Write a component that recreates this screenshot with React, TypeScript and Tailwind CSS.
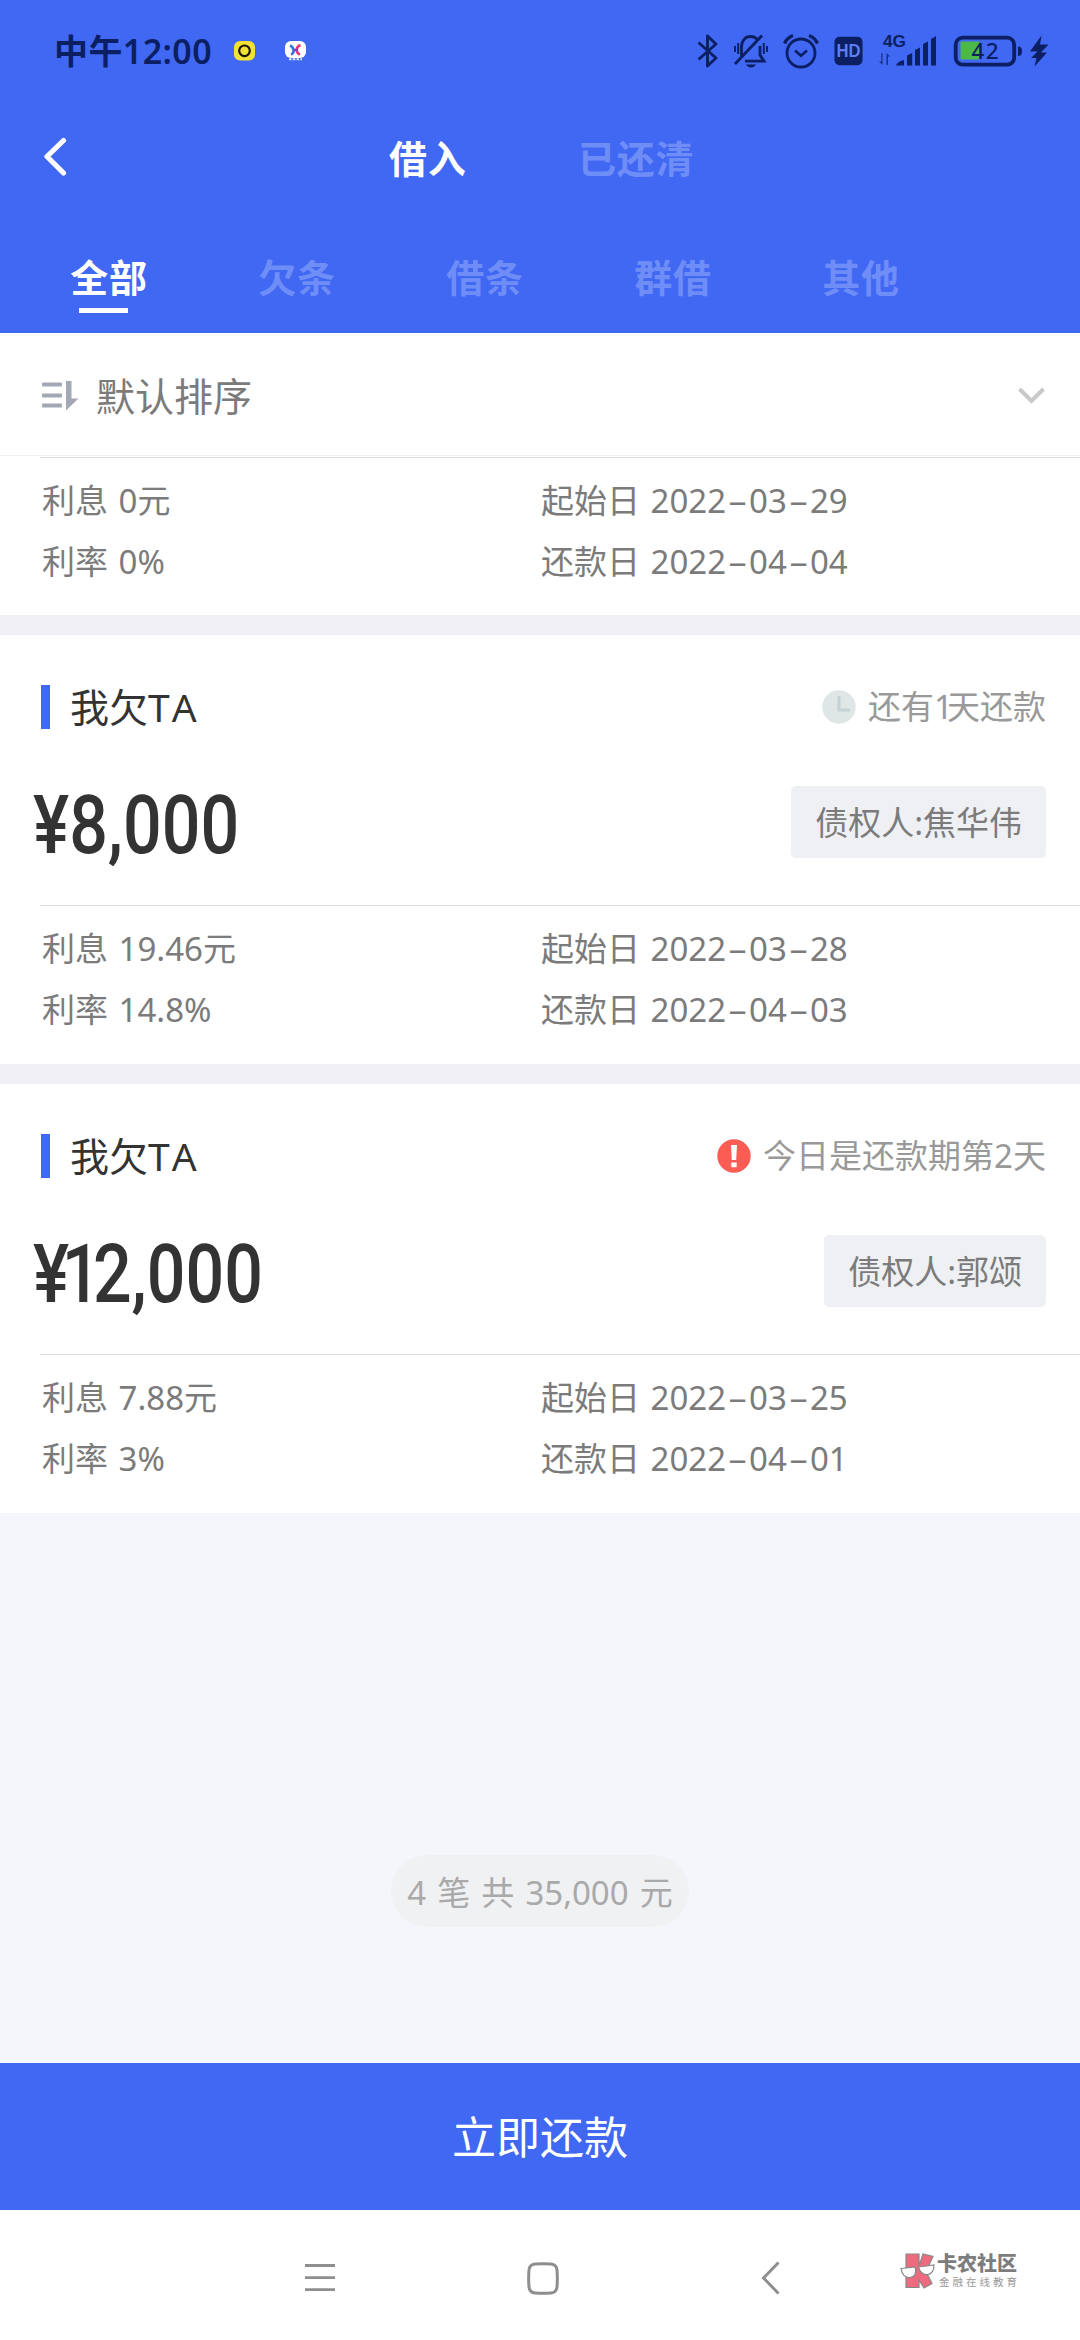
import { Fragment, useState } from "react";

type Loan = {
  id: number;
  amount?: string;
  creditor?: string;
  status?: "wait" | "alert";
  statusText?: string;
  interest: string;
  rate: string;
  start: string;
  due: string;
};

const tabs = ["全部", "欠条", "借条", "群借", "其他"];

const loans: Loan[] = [
  { id: 1, interest: "0元", rate: "0%", start: "2022-03-29", due: "2022-04-04" },
  {
    id: 2,
    amount: "¥8,000",
    creditor: "焦华伟",
    status: "wait",
    statusText: "还有1天还款",
    interest: "19.46元",
    rate: "14.8%",
    start: "2022-03-28",
    due: "2022-04-03",
  },
  {
    id: 3,
    amount: "¥12,000",
    creditor: "郭颂",
    status: "alert",
    statusText: "今日是还款期第2天",
    interest: "7.88元",
    rate: "3%",
    start: "2022-03-25",
    due: "2022-04-01",
  },
];

const StatusBar = () => (
  <div className="flex h-[102px] items-center pl-[54px] text-[#0b1f62]">
    <span className="w-[159px] whitespace-nowrap text-[34px] font-semibold leading-[40px] tracking-[0.4px]">
      中午12:00
    </span>
    <svg className="ml-[21px]" width="21" height="20" viewBox="0 0 21 20">
      <rect width="21" height="19.5" rx="6" fill="#f5e034" />
      <circle cx="10.5" cy="9.8" r="5.3" fill="none" stroke="#1a1500" strokeWidth="2.2" />
    </svg>
    <svg className="ml-[30px]" width="21" height="20" viewBox="0 0 21 20">
      <rect width="21" height="17" rx="6" fill="#fff" />
      <path d="M5 4.500c4 1.500 5 7.500 1 9" fill="none" stroke="#2d7be0" strokeWidth="2.600" />
      <path d="M15.500 4c-5 2-5 7.500-.5 9.500" fill="none" stroke="#e83a7c" strokeWidth="2.600" />
      <path d="M8 9h5" stroke="#8a3fc0" strokeWidth="2.500" />
      <path d="M4 18.300h13" stroke="#dfe6ff" strokeWidth="2" strokeDasharray="2.500 1.300" />
    </svg>

    <svg className="ml-[391px]" width="22" height="36" viewBox="0 0 22 36" fill="none" stroke="currentColor" strokeWidth="2.900">
      <path d="M1.500 9.500 L19 25 L10.500 33 V3 L19 11 L1.500 26.500" strokeLinejoin="round" />
    </svg>
    <svg className="ml-[14px]" width="36" height="36" viewBox="0 0 36 36" fill="none" stroke="currentColor" strokeWidth="2.800">
      <path d="M8.500 24V14c0-6.500 4-10.500 9-10.500 3 0 5.500 1.300 7 3.500" />
      <path d="M27 13v9l4 6.200H12" />
      <path d="M2 31 29 2.500" />
      <path d="M13 31.500h10c-1 2-3 3-5 3s-4-1-5-3z" fill="currentColor" stroke="none" />
      <path d="M2 13v6M5.200 10v11M34 13v6M30.800 10v11" strokeWidth="1.900" />
    </svg>
    <svg className="ml-[14px]" width="36" height="36" viewBox="0 0 36 36" fill="none" stroke="currentColor" strokeWidth="2.800">
      <circle cx="18" cy="20" r="14" />
      <path d="M12 17.500l6 5.200 6-5.200" />
      <path d="M1.500 10.500C3 7 6 4 10 2.500M34.500 10.500C33 7 30 4 26 2.500" strokeWidth="3.400" />
    </svg>
    <svg className="ml-[15px]" width="29" height="30" viewBox="0 0 29 30">
      <rect x="0.500" y="0.800" width="28" height="28.500" rx="5" fill="currentColor" />
      <text x="14.500" y="21" textAnchor="middle" fontSize="18" fontWeight="700" fontFamily="Liberation Sans" fill="#5f7df0" textLength="24" lengthAdjust="spacingAndGlyphs">
        HD
      </text>
    </svg>
    <svg className="ml-[15px] overflow-visible" width="60" height="36" viewBox="0 0 60 36" fill="currentColor">
      <text x="5" y="14" fontSize="16.500" fontWeight="700" fontFamily="Liberation Sans" textLength="23" lengthAdjust="spacingAndGlyphs">
        4G
      </text>
      <path d="M4.500 20v12l-3.500-3.500h2.300V20zM8.500 32V20l3.500 3.500h-2V32z" opacity=".75" />
      <path d="M18 32.500c1-3 4-4.500 8-5.500v5.500z" />
      <path d="M29 22.500l5.200-2.500v12.500H29zM37 17l5-2.500v18h-5zM45 11l5-2.500v24h-5zM53 6l5-3v29.500h-5z" />
    </svg>
    <svg className="ml-[14px]" width="100" height="36" viewBox="0 0 100 36">
      <rect x="3.700" y="4.700" width="58.500" height="27" rx="7" fill="none" stroke="currentColor" strokeWidth="3.800" />
      <path d="M10 8.500h17v18H10a1.500 1.500 0 0 1-1.500-1.500V10A1.500 1.500 0 0 1 10 8.500z" fill="#4bb848" />
      <path d="M66 13.500c3 0 4 1.500 4 4.700s-1 4.800-4 4.800z" fill="currentColor" />
      <text x="33" y="26" textAnchor="middle" fontSize="22.500" fontWeight="500" fontFamily="Noto Sans" fill="currentColor" textLength="27">
        42
      </text>
      <path d="M89.500 2.500 78 18.500h7.500L79 25h5.500l-2 8.500L95 19.500h-6l7.500-8h-8.500z" fill="currentColor" />
    </svg>
  </div>
);

const Header = () => {
  const [active, setActive] = useState(0);

  return (
    <header className="h-[333px] bg-[#4068f3] text-white">
      <StatusBar />
      <div className="flex h-[112px] items-center pl-10 text-[38px] font-bold tracking-[0.7px]">
        <svg width="30" height="42" viewBox="0 0 30 42" fill="none" stroke="currentColor" strokeWidth="5.200" strokeLinecap="round" strokeLinejoin="round">
          <path d="M23.500 3.500 7 19.500l16.500 16.500" />
        </svg>
        <span className="ml-[319px] w-[78px] whitespace-nowrap">借入</span>
        <span className="ml-[111px] whitespace-nowrap text-[#6f8df7]">已还清</span>
      </div>
      <nav className="flex pl-[15px] pt-[38px] text-[38px] font-bold tracking-[0.7px]">
        {tabs.map((tab, i) => (
          <button key={tab} onClick={() => setActive(i)} className="flex w-[188px] flex-col items-center">
            <span className={`leading-[50px] ${i === active ? "text-white" : "text-[#6f8df7]"}`}>{tab}</span>
            {i === active && <span className="mr-[11px] mt-[6px] h-[5px] w-[49px] bg-white" />}
          </button>
        ))}
      </nav>
    </header>
  );
};

const SortBar = () => (
  <div className="flex h-[123px] items-center border-b border-[#efefef] bg-white pl-[42px] pr-[35px] text-[#7b7b7b]">
    <svg className="mt-[4px]" width="37" height="30" viewBox="0 0 37 30" fill="#a3a8b4">
      <rect y="1.500" width="20" height="4" rx="1" />
      <rect y="12.500" width="20" height="4" rx="1" />
      <rect y="22.500" width="20" height="4" rx="1" />
      <path d="M24 0h5.500v17.500H36.500L24 29.500z" />
    </svg>
    <span className="ml-[17px] pt-[4px] text-[39px] leading-[50px]">默认排序</span>
    <svg className="ml-auto mt-[4px]" width="27" height="18" viewBox="0 0 27 18" fill="none" stroke="#c9c9c9" strokeWidth="4">
      <path d="M1.500 2 13.500 14 25.500 2" />
    </svg>
  </div>
);

const WaitIcon = () => (
  <svg width="34" height="34" viewBox="0 0 34 34">
    <circle cx="17" cy="17" r="16.700" fill="#dfe6e6" />
    <path d="M17 6v14h11" fill="none" stroke="#c5d1d2" strokeWidth="3" />
  </svg>
);

const AlertIcon = () => (
  <svg width="34" height="34" viewBox="0 0 34 34">
    <circle cx="17" cy="17" r="16.700" fill="#fb5c53" />
    <path d="M14 6h6l-.8 15h-4.400zM14.300 23.500h5.400v4.700h-5.400z" fill="#fff" />
  </svg>
);

const DateText = ({ value }: { value: string }) => (
  <>
    {value.split("-").map((part, i) => (
      <Fragment key={i}>
        {i > 0 && <span className="inline-block w-[23px] scale-x-[1.9] text-center">-</span>}
        {part}
      </Fragment>
    ))}
  </>
);

// The "1" is narrow, so it sits closer to its neighbours than the other digits
const Amount = ({ value }: { value: string }) => (
  <div className="origin-left scale-x-[0.83] whitespace-nowrap pt-[5px] font-[Roboto] text-[82px] font-medium leading-[72px] text-[#333]">
    {value.split("").map((ch, i) => (
      <span key={i} className={ch === "1" || value[i + 1] === "1" ? "tracking-[-9px]" : ""}>
        {ch}
      </span>
    ))}
  </div>
);

const StatusText = ({ value }: { value: string }) => (
  <span>
    {value.split("").map((ch, i) => (
      <span key={i} className={ch === "1" ? "tracking-[-6px]" : ""}>
        {ch}
      </span>
    ))}
  </span>
);

const LoanCard = ({ loan }: { loan: Loan }) => (
  <section className="bg-white">
    {loan.amount && (
      <>
        <div className="flex h-[94px] items-center pr-[34px] pt-[50px]">
          <span className="ml-[41px] h-11 w-[9px] bg-[#4068f3]" />
          <span className="ml-[20px] text-[39px] leading-[44px] text-[#333]">
            我欠<span className="tracking-[2px] [font-kerning:none]">TA</span>
          </span>
          <div className="ml-auto flex items-center gap-[12px] text-[33px] leading-[44px] text-[#999]">
            {loan.status === "wait" ? <WaitIcon /> : <AlertIcon />}
            <StatusText value={loan.statusText ?? ""} />
          </div>
        </div>
        <div className="mt-[57px] flex h-[72px] items-center justify-between pl-[33px] pr-[34px]">
          <Amount value={loan.amount} />
          <span className="h-[72px] rounded-[5px] bg-[#eff0f4] px-6 text-[33px] leading-[74px] text-[#7b7b7b]">
            债权人:{loan.creditor}
          </span>
        </div>
      </>
    )}
    <div className={`ml-10 border-t border-[#dcdcdc] ${loan.amount ? "mt-[47px]" : "mt-px"}`} />
    <div
      className={`grid grid-cols-2 pt-[12px] text-[33px] leading-[61px] text-[#7b7b7b] [word-spacing:2px] ${
        loan.amount ? "pb-[24px]" : "pb-[23px]"
      }`}
    >
      <span className="pl-[42px]">利息 {loan.interest}</span>
      <span className="pl-px">
        起始日 <DateText value={loan.start} />
      </span>
      <span className="pl-[42px]">利率 {loan.rate}</span>
      <span className="pl-px">
        还款日 <DateText value={loan.due} />
      </span>
    </div>
  </section>
);

const Watermark = () => (
  <div className="flex items-center">
    <svg width="36" height="38" viewBox="0 0 36 38" stroke="#888" strokeWidth="1.200">
      <path d="M6 2h13v12l4-12 10 2.500-7 15 6 12-8 4.500-5-8v7.500H6z" fill="#ee6b7d" />
      <path d="M1 16.500 15 15c2 6 0 10-5 10.500S2 22 1 16.500zM18.500 15 34 13c0 6-2 9-6.500 9.500S20 20 18.500 15z" fill="#fff" />
    </svg>
    <div className="ml-px flex flex-col text-[#7d7d7d]">
      <span className="text-[20px] font-black leading-[20px]">卡农社区</span>
      <span className="mt-[2px] pl-[2px] text-[10.500px] leading-[12px] tracking-[3px] text-[#999]">金融在线教育</span>
    </div>
  </div>
);

const SystemNav = () => (
  <div className="flex h-[130px] items-center bg-white text-[#8e8e8e]">
    <svg className="ml-[305px] mt-[6px]" width="30" height="32" viewBox="0 0 30 32" stroke="currentColor" strokeWidth="2.800">
      <path d="M0 3.500h30M0 15.700h30M0 27.700h30" />
    </svg>
    <svg className="ml-[192px] mt-[6px]" width="32" height="33" viewBox="0 0 32 33" fill="none" stroke="currentColor" strokeWidth="3">
      <path d="M8 2Q16 1.300 24 2Q29.500 2.500 30 8Q30.700 16.500 30 25Q29.500 30.500 24 31Q16 31.700 8 31Q2.500 30.500 2 25Q1.300 16.500 2 8Q2.500 2.500 8 2Z" />
    </svg>
    <svg className="ml-[202px] mt-[6px]" width="20" height="34" viewBox="0 0 20 34" fill="none" stroke="currentColor" strokeWidth="3">
      <path d="M17.500 1.500 2.500 17l15 15.500" />
    </svg>
    <div className="-mt-[9px] ml-[119px]">
      <Watermark />
    </div>
  </div>
);

const App = () => {
  return (
    <div className="flex h-[2340px] w-[1080px] flex-col overflow-hidden bg-[#f5f6fb] font-['Noto_Sans','Noto_Sans_CJK_SC',sans-serif]">
      <Header />
      <SortBar />
      <main className="flex flex-col gap-5 bg-[#efeff4]">
        {loans.map((loan) => (
          <LoanCard key={loan.id} loan={loan} />
        ))}
      </main>
      <div className="mt-auto flex h-[208px] justify-center">
        <div className="h-[72px] rounded-full bg-[#f0f1f3] px-4 text-[33px] leading-[75px] text-[#a9a9a9] [word-spacing:2.5px]">
          4 笔 共 35,000 元
        </div>
      </div>
      <button className="h-[147px] w-full bg-[#4068f3] text-[44px] text-white">立即还款</button>
      <SystemNav />
    </div>
  );
};

export default App;
